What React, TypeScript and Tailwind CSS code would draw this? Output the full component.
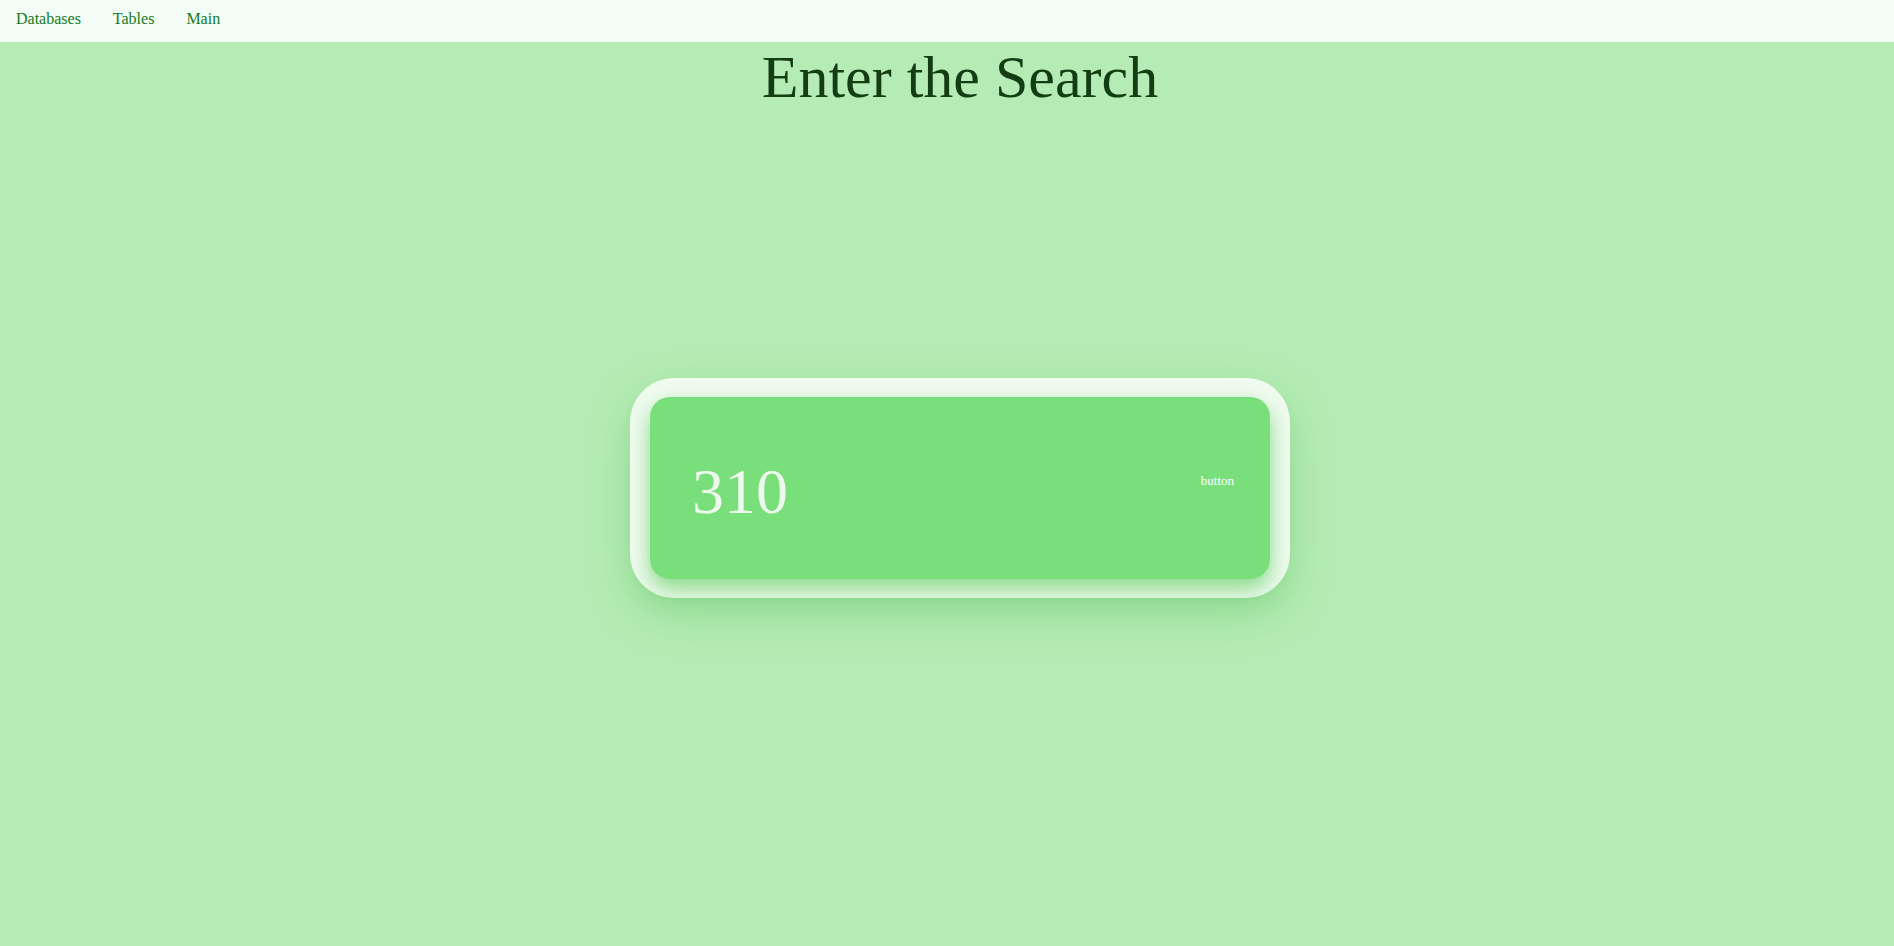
import React from "react";

const serif = "font-['Times_New_Roman','Liberation_Serif',serif]";

export default function App() {
  const [value, setValue] = React.useState("310");

  return (
    <div className={`min-h-screen w-full bg-[#b5ecb5] ${serif}`}>
      {/* Top nav */}
      <nav className="flex h-[42px] items-center bg-[#f4fcf6] pb-[5px]">
        <a href="#" className="px-4 text-base text-[#137a1e]">Databases</a>
        <a href="#" className="px-4 text-base text-[#137a1e]">Tables</a>
        <a href="#" className="px-4 text-base text-[#137a1e]">Main</a>
      </nav>

      <main className="flex flex-col items-center pl-[26px]">
        <h1 className="m-0 mt-[5px] text-[60px] font-normal leading-none text-[#143d14]">Enter the Search</h1>

        {/* Search card */}
        <div className="mt-[271px] w-[660px] rounded-[44px] bg-[#f1fbf1] px-5 py-[19px] shadow-[0_16px_40px_rgba(90,190,90,0.4)]">
          <div className="flex h-[182px] items-center justify-between rounded-[20px] bg-[#79df7b] pl-[42px] pr-[36px] shadow-[0_10px_22px_rgba(100,205,100,0.75)]">
            <input
              value={value}
              onChange={(e) => setValue(e.target.value)}
              className={`mt-[7px] w-[400px] bg-transparent text-[64px] leading-none text-[#eef9ee] outline-none ${serif}`}
            />
            <button className={`-mt-[14px] text-[13px] text-white ${serif}`}>button</button>
          </div>
        </div>
      </main>
    </div>
  );
}
